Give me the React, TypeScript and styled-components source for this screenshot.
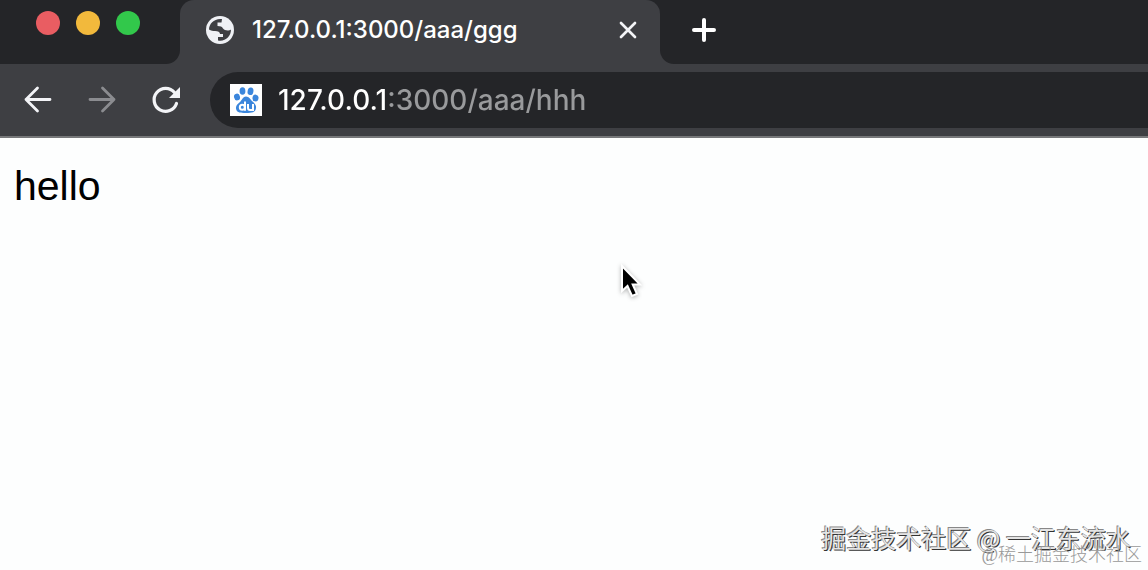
import React, { useState } from "react";
import styled, { createGlobalStyle } from "styled-components";

const GlobalStyle = createGlobalStyle`
  * { box-sizing: border-box; }
  body { margin: 0; background: #fdfefe; }
`;

const Browser = styled.div`
  display: flex;
  flex-direction: column;
  min-height: 100vh;
  overflow: hidden;
  font-family: Inter, "Liberation Sans", sans-serif;
`;

const TabStrip = styled.header`
  display: flex;
  height: 64px;
  background: #3e3f43;
`;

const StripSection = styled.div<{ $side: "start" | "end" }>`
  display: flex;
  background: #242528;
  ${({ $side }) =>
    $side === "start"
      ? `
    flex: 0 0 180px;
    gap: 16px;
    padding: 11px 36px;
    border-bottom-right-radius: 14px;
  `
      : `
    flex: 1;
    align-items: flex-start;
    padding: 14px 28px;
    border-bottom-left-radius: 14px;
  `}
`;

const WindowButton = styled.button<{ $color: string }>`
  width: 24px;
  height: 24px;
  padding: 0;
  border: 0;
  border-radius: 50%;
  background: ${({ $color }) => $color};
`;

const TabWell = styled.div`
  flex: 0 1 480px;
  min-width: 0;
  background: #242528;
`;

const Tab = styled.div`
  display: flex;
  align-items: center;
  height: 64px;
  padding: 0 20px 4px 24px;
  border-radius: 14px 14px 0 0;
  background: #3e3f43;
  color: #fff;
`;

const TabTitle = styled.span`
  flex: 1;
  min-width: 0;
  margin-left: 16px;
  overflow: hidden;
  font-size: 24px;
  font-weight: 500;
  line-height: 32px;
  white-space: nowrap;
`;

const IconButton = styled.button<{ $size: number }>`
  display: flex;
  flex: none;
  align-items: center;
  justify-content: center;
  width: ${({ $size }) => $size}px;
  height: ${({ $size }) => $size}px;
  padding: 0;
  border: 0;
  background: transparent;
  color: #f3f4f7;

  &:disabled { color: #8b8c90; }
`;

const Toolbar = styled.nav`
  display: flex;
  align-items: center;
  gap: 32px;
  height: 74px;
  padding: 0 0 0 22px;
  border-bottom: 2px solid #77787a;
  background: #3e3f43;
`;

const AddressBar = styled.label`
  display: flex;
  flex: 1;
  align-items: center;
  gap: 16px;
  min-width: 0;
  height: 56px;
  margin-left: -4px;
  padding-left: 20px;
  border-radius: 28px 0 0 28px;
  background: #242528;
`;

/* The host is white and the port and path are grey. */
const AddressInput = styled.input`
  flex: 1;
  min-width: 0;
  height: 40px;
  padding: 0;
  border: 0;
  outline: 0;
  background: linear-gradient(to right, #fff 109px, #999a9c 109px);
  background-clip: text;
  -webkit-background-clip: text;
  color: transparent;
  font-family: inherit;
  font-size: 28px;
  font-weight: 500;
`;

const Page = styled.main`
  display: flex;
  flex: 1;
  flex-direction: column;
  justify-content: space-between;
`;

const Greeting = styled.p`
  margin: 24px 14px;
  color: #000;
  font-family: "Liberation Sans", Arial, sans-serif;
  font-size: 41px;
  line-height: 48px;
`;

const Credits = styled.footer`
  display: flex;
  flex-direction: column;
  align-items: flex-end;
  padding: 0 6px 3px 0;
  font-family: "Noto Sans CJK SC", sans-serif;
  white-space: nowrap;
`;

const Author = styled.span`
  margin-right: 11px;
  color: #e4e4e4;
  font-size: 25px;
  line-height: 32px;
  text-shadow: 1px 1px 0 #333, -1px -1px 0 #888;
`;

const Community = styled.span`
  margin-top: -10px;
  color: #999;
  font-family: "Liberation Serif", "Noto Sans CJK SC", serif;
  font-size: 18px;
  font-weight: 300;
  line-height: 24px;
`;

const Pointer = styled.svg`
  position: absolute;
  top: 262px;
  left: 618px;
  filter: drop-shadow(0 1px 2px rgba(0, 0, 0, 0.3));
  pointer-events: none;
`;

const stroke = {
  fill: "none",
  stroke: "currentColor",
  strokeLinecap: "round" as const,
  strokeLinejoin: "round" as const,
};

const GlobeIcon = () => (
  <svg width="32" height="32" viewBox="0 0 32 32" aria-hidden="true">
    <circle cx="16" cy="16" r="14" fill="#eff1f5" />
    <path
      fill="#3e3f43"
      d="M18 5C10.500 4 5 9.500 5 15.500c2 1.500 4 1.500 6 1.500 3 0 5 1 5 3h3v3h-5v3.500c7 1.500 13-4 13-11-2 1.500-6.500 1.300-8-1-1-1.800-2.500-2.500-5.500-2.500V8.500h4Z"
    />
  </svg>
);

const PawIcon = () => (
  <svg width="32" height="32" viewBox="0 0 32 32" aria-hidden="true">
    <path fill="#fff" d="M0 0h32v32H0z" />
    <g fill="#3b86dc">
      <ellipse cx="7" cy="13" rx="3" ry="3.400" transform="rotate(-12 7 13)" />
      <ellipse cx="12.500" cy="7" rx="2.900" ry="3.800" />
      <ellipse cx="20.500" cy="7.300" rx="2.900" ry="3.800" transform="rotate(12 20.500 7.300)" />
      <ellipse cx="25.500" cy="14" rx="3" ry="3.400" transform="rotate(8 25.500 14)" />
      <path d="M16 12.500c3 0 4.500 3 6.500 5 2 1.800 4 3.500 3.500 6.500-.5 4.500-4 5-10 5S6.500 28.500 6 24.500c-.4-3 2-4.700 4-6.500 2-2 3-5.500 6-5.500Z" />
    </g>
    <g fill="none" stroke="#fff" strokeWidth="2">
      <circle cx="12.300" cy="23.300" r="2.500" />
      <path d="M15 17.500v9.300M18 20v4q0 2 2 2h3V20" />
    </g>
  </svg>
);

export default function App() {
  const [address, setAddress] = useState("127.0.0.1:3000/aaa/hhh");

  return (
    <Browser>
      <GlobalStyle />
      <TabStrip>
        <StripSection $side="start">
          <WindowButton $color="#e95d62" aria-label="Close window" />
          <WindowButton $color="#f2b93c" aria-label="Minimize window" />
          <WindowButton $color="#32c84b" aria-label="Zoom window" />
        </StripSection>
        <TabWell>
          <Tab>
            <GlobeIcon />
            <TabTitle>127.0.0.1:3000/aaa/ggg</TabTitle>
            <IconButton $size={24} aria-label="Close tab">
              <svg width="24" height="24" viewBox="0 0 24 24" {...stroke} strokeWidth="2.700">
                <path d="m5 5 14 14M19 5 5 19" />
              </svg>
            </IconButton>
          </Tab>
        </TabWell>
        <StripSection $side="end">
          <IconButton $size={32} aria-label="New tab">
            <svg width="32" height="32" viewBox="0 0 32 32" {...stroke} stroke="#fff" strokeWidth="4">
              <path d="M16 6v20M6 16h20" />
            </svg>
          </IconButton>
        </StripSection>
      </TabStrip>
      <Toolbar>
        <IconButton $size={32} aria-label="Back">
          <svg width="32" height="32" viewBox="0 0 32 32" {...stroke} strokeWidth="2.800">
            <path d="M28 15.500H4M15.500 4 4 15.500 15.500 27" />
          </svg>
        </IconButton>
        <IconButton $size={32} aria-label="Forward" disabled>
          <svg width="32" height="32" viewBox="0 0 32 32" {...stroke} strokeWidth="2.800">
            <path d="M4 15.500h24M16.500 4 28 15.500 16.500 27" />
          </svg>
        </IconButton>
        <IconButton $size={32} aria-label="Reload">
          <svg width="32" height="32" viewBox="0 0 32 32" {...stroke} strokeWidth="3.200">
            <path d="M26.500 19.500A11.500 11.500 0 1 1 24.500 8.500" />
            <path d="M30 3v11H19Z" fill="currentColor" stroke="none" />
          </svg>
        </IconButton>
        <AddressBar>
          <PawIcon />
          <AddressInput
            aria-label="Address"
            spellCheck={false}
            value={address}
            onChange={(event) => setAddress(event.target.value)}
          />
        </AddressBar>
      </Toolbar>
      <Page>
        <Greeting>hello</Greeting>
        <Credits>
          <Author>掘金技术社区 @ 一江东流水</Author>
          <Community>@稀土掘金技术社区</Community>
        </Credits>
      </Page>
      <Pointer width="28" height="40" viewBox="0 0 28 40" aria-hidden="true">
        <path
          d="M4 4v25l5.500-5 4.500 10 5-2-4.300-9.500H22Z"
          fill="#000"
          stroke="#fff"
          strokeWidth="2"
        />
      </Pointer>
    </Browser>
  );
}
